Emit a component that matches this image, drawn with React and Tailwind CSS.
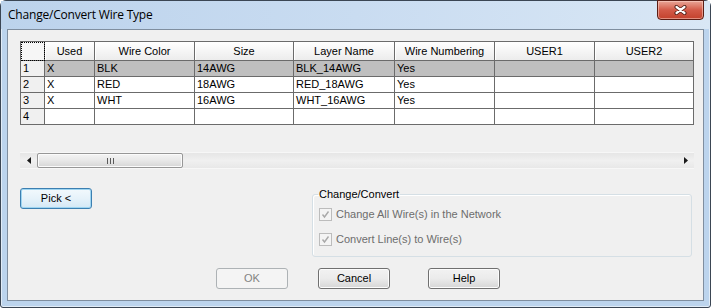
import React from "react";

const cols = [
  { name: "Used", w: "w-[50px]" },
  { name: "Wire Color", w: "w-[100px]" },
  { name: "Size", w: "w-[99px]" },
  { name: "Layer Name", w: "w-[101px]" },
  { name: "Wire Numbering", w: "w-[100px]" },
  { name: "USER1", w: "w-[100px]" },
  { name: "USER2", w: "w-[99px]" },
];

const rows = [
  ["X", "BLK", "14AWG", "BLK_14AWG", "Yes", "", ""],
  ["X", "RED", "18AWG", "RED_18AWG", "Yes", "", ""],
  ["X", "WHT", "16AWG", "WHT_16AWG", "Yes", "", ""],
  ["", "", "", "", "", "", ""],
];

const Check = () => (
  <div className="w-[13px] h-[13px] border border-[#bcbcbc] bg-[#f4f4f4] flex items-center justify-center">
    <svg width="9" height="9" viewBox="0 0 9 9">
      <path d="M1.5 4.5 L3.5 7 L7.5 1.5" fill="none" stroke="#a9a9a9" strokeWidth="1.4" />
    </svg>
  </div>
);

const WinButton = ({ children, disabled, focused }) => (
  <button
    className={`w-[72px] h-[21px] rounded-[3px] border text-[11px] leading-none flex items-center justify-center ${
      disabled
        ? "border-[#adb2b5] bg-[#f4f4f4] text-[#838383]"
        : focused
        ? "border-[#3c7fb1] bg-gradient-to-b from-[#f2f9fd] via-[#e6f2fa] to-[#d4e8f5] text-black shadow-[inset_0_0_0_1px_#9fd5f1]"
        : "border-[#707070] bg-gradient-to-b from-[#f2f2f2] via-[#ebebeb] to-[#d6d6d6] text-black shadow-[inset_0_0_0_1px_#fcfcfc]"
    }`}
  >
    {children}
  </button>
);

export default function App() {
  return (
    <div
      className="w-[711px] h-[308px] rounded-t-[6px] rounded-b-[3px] border border-[#3b4654] bg-[#bcd4ed] flex flex-col px-[6px] pb-[6px] shadow-[inset_0_0_0_1px_rgba(255,255,255,0.55)]"
      style={{ fontFamily: '"Liberation Sans", Arial, sans-serif' }}
    >
      {/* title bar */}
      <div className="h-[28px] flex items-start justify-between bg-gradient-to-r from-[#bcd3ec] via-[#c9dcf1] to-[#d9e7f5] -mx-[6px] px-[7px]">
        <span
          className="mt-[5px] text-[12px] tracking-[-0.2px] text-black"
          style={{ fontFamily: '"Open Sans", "Noto Sans", sans-serif' }}
        >
          Change/Convert Wire Type
        </span>
        <div className="-mt-[1px] -mr-[1px] w-[47px] h-[20px] rounded-b-[4px] border border-[#5b1d14] bg-gradient-to-b from-[#e8a597] via-[#d35a48] to-[#c3412c] flex items-center justify-center shadow-[inset_0_0_0_1px_rgba(255,220,210,0.5)]">
          <svg width="13" height="10" viewBox="0 0 13 10">
            <path
              d="M2.5 2 L10.5 8 M10.5 2 L2.5 8"
              stroke="#4a1a12"
              strokeWidth="4"
              strokeLinecap="round"
            />
            <path
              d="M2.5 2 L10.5 8 M10.5 2 L2.5 8"
              stroke="#ffffff"
              strokeWidth="2.2"
              strokeLinecap="round"
            />
          </svg>
        </div>
      </div>

      {/* client area */}
      <div className="flex-1 border border-[#7f8e9f] bg-[#f0f0f0] pl-[12px] pt-[11px] flex flex-col">
        {/* grid */}
        <div className="w-[674px] border-l border-t border-[#6b6b6b] text-[11px] text-black">
          <div className="flex h-[19px]">
            <div className="w-[24px] border-r border-b border-[#6b6b6b] bg-[#f6f6f6] outline outline-1 outline-dotted outline-black -outline-offset-1" />
            {cols.map((c) => (
              <div
                key={c.name}
                className={`${c.w} border-r border-b border-[#6b6b6b] bg-gradient-to-b from-[#ffffff] to-[#ececec] flex items-center justify-center shadow-[inset_1px_0_0_#ffffff]`}
              >
                {c.name}
              </div>
            ))}
          </div>
          {rows.map((r, i) => (
            <div key={i} className="flex h-[16px]">
              <div className="w-[24px] border-r border-b border-[#6b6b6b] bg-[#f0f0f0] pl-[2px] flex items-center">
                {i + 1}
              </div>
              {cols.map((c, j) => (
                <div
                  key={c.name}
                  className={`${c.w} border-r border-b border-[#6b6b6b] pl-[2px] flex items-center whitespace-nowrap overflow-hidden ${
                    i === 0 ? "bg-[#bfbfbf]" : "bg-white"
                  }`}
                >
                  {r[j]}
                </div>
              ))}
            </div>
          ))}
        </div>

        {/* horizontal scrollbar */}
        <div className="mt-[27px] w-[674px] h-[17px] bg-gradient-to-b from-[#e6e6e6] via-[#f0f0f0] to-[#e8e8e8] border-t border-b border-[#f7f7f7] flex items-center">
          <div className="w-[17px] h-full flex items-center justify-center">
            <svg width="4" height="7" viewBox="0 0 4 7">
              <path d="M4 0 L0 3.5 L4 7 Z" fill="#1a1a1a" />
            </svg>
          </div>
          <div className="w-[146px] h-[15px] rounded-[2px] border border-[#979797] bg-gradient-to-b from-[#f4f4f4] via-[#e8e8e8] to-[#d6d6d6] flex items-center justify-center gap-[2px] shadow-[inset_0_0_0_1px_#fbfbfb]">
            <div className="w-[1px] h-[6px] bg-[#5a5a5a]" />
            <div className="w-[1px] h-[6px] bg-[#5a5a5a]" />
            <div className="w-[1px] h-[6px] bg-[#5a5a5a]" />
          </div>
          <div className="flex-1" />
          <div className="w-[17px] h-full flex items-center justify-center">
            <svg width="4" height="7" viewBox="0 0 4 7">
              <path d="M0 0 L4 3.5 L0 7 Z" fill="#1a1a1a" />
            </svg>
          </div>
        </div>

        {/* pick + group box */}
        <div className="mt-[19px] flex items-start">
          <WinButton focused>Pick &lt;</WinButton>
          <fieldset className="ml-[220px] w-[380px] h-[69px] border border-[#d5dfe5] rounded-[3px] px-[6px] shadow-[inset_1px_1px_0_#ffffff]">
            <legend className="text-[11px] leading-[13px] text-black px-[1px] -ml-[1px]">
              Change/Convert
            </legend>
            <div className="mt-[7px] h-[13px] flex items-center gap-[4px] text-[11px] leading-[13px] text-[#6d6d6d]">
              <Check />
              <span>Change All Wire(s) in the Network</span>
            </div>
            <div className="mt-[12px] h-[13px] flex items-center gap-[4px] text-[11px] leading-[13px] text-[#6d6d6d]">
              <Check />
              <span>Convert Line(s) to Wire(s)</span>
            </div>
          </fieldset>
        </div>

        {/* bottom buttons */}
        <div className="mt-[11px] ml-[196px] flex">
          <WinButton disabled>OK</WinButton>
          <div className="ml-[30px]">
            <WinButton>Cancel</WinButton>
          </div>
          <div className="ml-[38px]">
            <WinButton>Help</WinButton>
          </div>
        </div>
      </div>
    </div>
  );
}
